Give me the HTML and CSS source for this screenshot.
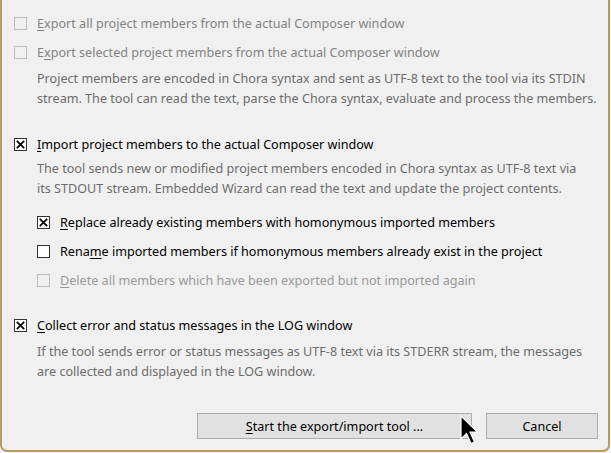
FILE: index.html
```html
<!DOCTYPE html>
<html>
<head>
<meta charset="utf-8">
<link rel="stylesheet" href="styles.css">
</head>
<body>
<div class="window">
  <div class="row r1 disabled">
    <span class="cb"></span>
    <span class="label"><u>E</u>xport all project members from the actual Composer window</span>
  </div>
  <div class="row r2 disabled">
    <span class="cb"></span>
    <span class="label">E<u>x</u>port selected project members from the actual Composer window</span>
  </div>
  <p class="desc d1">Project members are encoded in Chora syntax and sent as UTF-8 text to the tool via its STDIN<br>stream. The tool can read the text, parse the Chora syntax, evaluate and process the members.</p>

  <div class="row r3">
    <span class="cb on"><svg viewBox="0 0 13 13" width="13" height="13"><path d="M2.8 2.8 L10.2 10.2 M10.2 2.8 L2.8 10.2" stroke="#000" stroke-width="1.7" fill="none"/></svg></span>
    <span class="label"><u>I</u>mport project members to the actual Composer window</span>
  </div>
  <p class="desc d2">The tool sends new or modified project members encoded in Chora syntax as UTF-8 text via<br>its STDOUT stream. Embedded Wizard can read the text and update the project contents.</p>

  <div class="row sub r4">
    <span class="cb on"><svg viewBox="0 0 13 13" width="13" height="13"><path d="M2.8 2.8 L10.2 10.2 M10.2 2.8 L2.8 10.2" stroke="#000" stroke-width="1.7" fill="none"/></svg></span>
    <span class="label"><u>R</u>eplace already existing members with homonymous imported members</span>
  </div>
  <div class="row sub r5">
    <span class="cb on"></span>
    <span class="label">Rena<u>m</u>e imported members if homonymous members already exist in the project</span>
  </div>
  <div class="row sub r6 disabled">
    <span class="cb"></span>
    <span class="label"><u>D</u>elete all members which have been exported but not imported again</span>
  </div>

  <div class="row r7">
    <span class="cb on"><svg viewBox="0 0 13 13" width="13" height="13"><path d="M2.8 2.8 L10.2 10.2 M10.2 2.8 L2.8 10.2" stroke="#000" stroke-width="1.7" fill="none"/></svg></span>
    <span class="label"><u>C</u>ollect error and status messages in the LOG window</span>
  </div>
  <p class="desc d3">If the tool sends error or status messages as UTF-8 text via its STDERR stream, the messages<br>are collected and displayed in the LOG window.</p>

  <div class="buttons">
    <button class="btn start"><u>S</u>tart the export/import tool ...</button>
    <button class="btn cancel">Cancel</button>
  </div>

  <svg class="cursor" width="20" height="32" viewBox="0 0 20 32">
    <path d="M1 1 L1 24 L6.5 18.5 L11 28.5 L14.5 27 L10 17 L17.5 17 Z" fill="#000" stroke="#fff" stroke-width="1.2" stroke-linejoin="miter"/>
  </svg>
</div>
</body>
</html>
```

FILE: styles.css
```css
html, body {
  margin: 0;
  padding: 0;
  background: #f4f4f4;
}
body {
  width: 611px;
  height: 453px;
  overflow: hidden;
  font-family: "Noto Sans", "Open Sans", sans-serif;
  font-size: 12.6px;
}
.window {
  position: relative;
  box-sizing: border-box;
  width: 610px;
  height: 452px;
  background: #f0f0f0;
  border-left: 2px solid #b99b5f;
  border-right: 2px solid #b99b5f;
  border-bottom: 2px solid #b99b5f;
  border-radius: 0 0 7px 7px;
  padding: 13px 10px 0 12px;
  display: flex;
  flex-direction: column;
}
.row {
  height: 20px;
  display: flex;
  align-items: center;
  color: #000;
  white-space: nowrap;
}
.row.sub { padding-left: 23px; }
.cb {
  box-sizing: border-box;
  width: 13px;
  height: 13px;
  border: 1px solid #333;
  background: #fff;
  margin-right: 10px;
  flex: none;
  position: relative;
}
.cb svg { position: absolute; left: -1px; top: -1px; }
.disabled .cb {
  border-color: #bcbcbc;
  background: #f0f0f0;
}
.disabled .label { color: #838383; }
.r6 .label { color: #9a9a9a; }
.label u { text-decoration-thickness: 1px; text-underline-offset: 2px; }
.desc {
  margin: 0;
  padding-left: 23px;
  line-height: 20px;
  color: #6d6d6d;
  white-space: nowrap;
}
.r2 { margin-top: 9px; }
.d1 { margin-top: 7px; }
.r3 { margin-top: 25px; }
.d2 { margin-top: 5px; }
.r4 { margin-top: 13px; }
.r5 { margin-top: 9px; }
.r6 { margin-top: 9px; }
.r7 { margin-top: 25px; }
.d3 { margin-top: 7px; }
.buttons {
  margin-top: 31px;
  display: flex;
  justify-content: flex-end;
  gap: 14px;
}
.btn {
  box-sizing: border-box;
  height: 26px;
  background: #e1e1e1;
  border: 1px solid #adadad;
  font-family: inherit;
  font-size: 12.6px;
  color: #000;
  padding: 0;
  margin: 0;
}
.btn u { text-underline-offset: 2px; }
.start { width: 275px; }
.cancel { width: 112px; }
.cursor {
  position: absolute;
  left: 458px;
  top: 415px;
}
```
